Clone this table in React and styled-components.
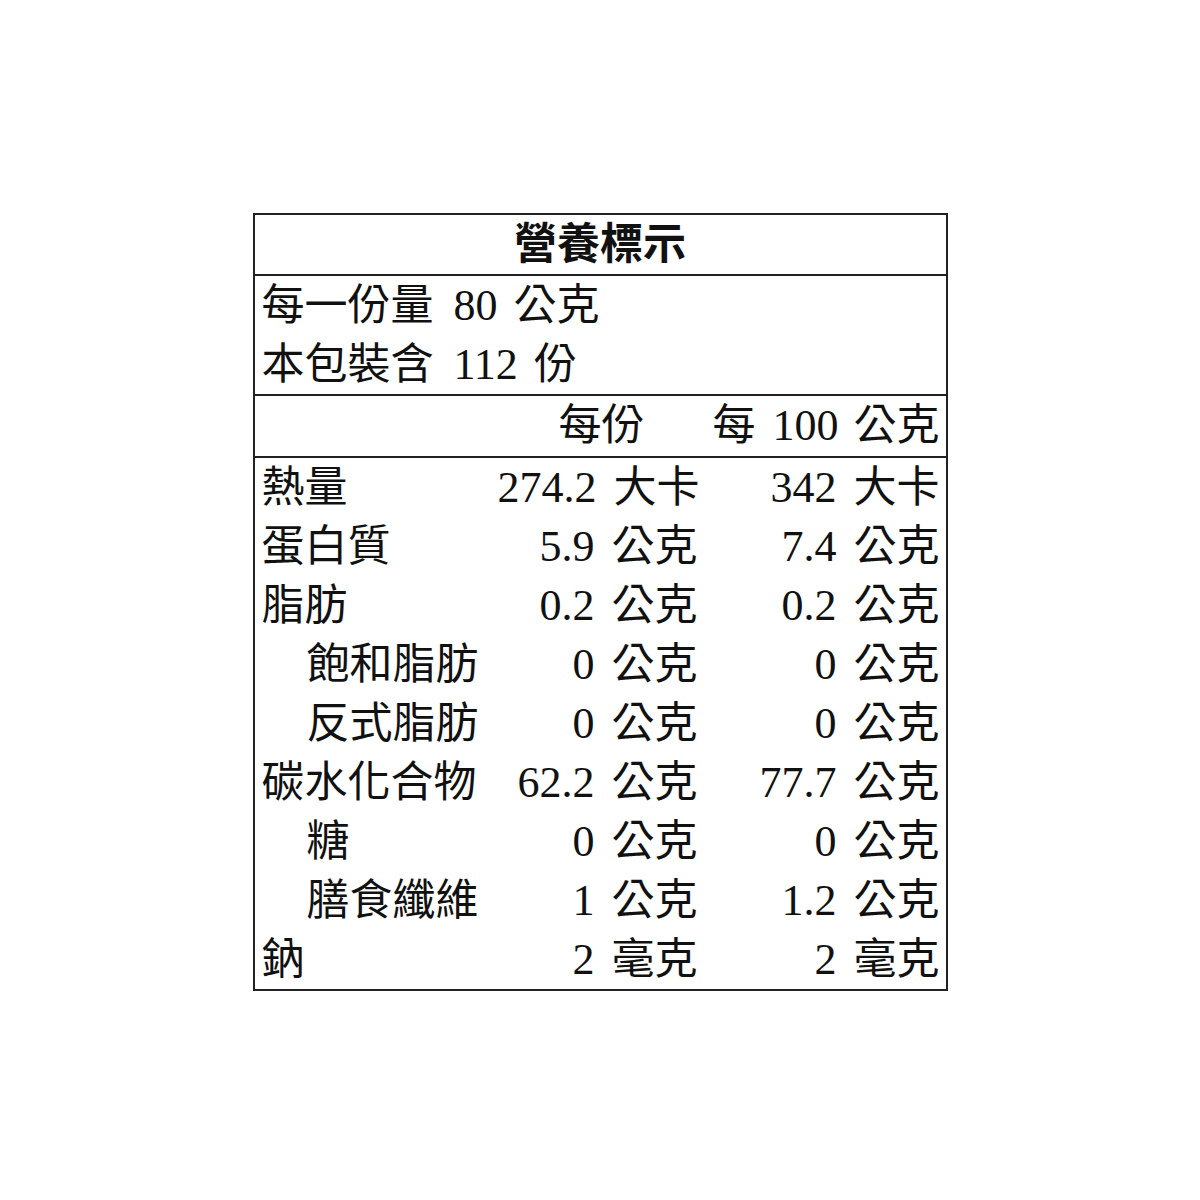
import React from 'react';
import styled, { createGlobalStyle } from 'styled-components';

const GlobalStyle = createGlobalStyle`
    html, body {
        margin: 0;
        padding: 0;
        background: #ffffff;
    }
    body {
        font-family: 'Liberation Serif', 'Noto Sans CJK TC', serif;
        color: #111111;
    }
`;

const rows = [
    { name: '熱量', serving: '274.2', per100: '342', unit: '大卡' },
    { name: '蛋白質', serving: '5.9', per100: '7.4', unit: '公克' },
    { name: '脂肪', serving: '0.2', per100: '0.2', unit: '公克' },
    { name: '飽和脂肪', serving: '0', per100: '0', unit: '公克', sub: true },
    { name: '反式脂肪', serving: '0', per100: '0', unit: '公克', sub: true },
    { name: '碳水化合物', serving: '62.2', per100: '77.7', unit: '公克' },
    { name: '糖', serving: '0', per100: '0', unit: '公克', sub: true },
    { name: '膳食纖維', serving: '1', per100: '1.2', unit: '公克', sub: true },
    { name: '鈉', serving: '2', per100: '2', unit: '毫克' },
];

const App = () => {
    return (
        <Page>
            <GlobalStyle />
            <Label>
                <Title>營養標示</Title>
                <Serving>
                    <Line>
                        每一份量<Num before={20} after={16}>80</Num>公克
                    </Line>
                    <Line>
                        本包裝含<Num before={20} after={16}>112</Num>份
                    </Line>
                </Serving>
                <HeaderRow>
                    <span />
                    <Cell pad={53}>每份</Cell>
                    <Cell>
                        每<Num before={17} after={15}>100</Num>公克
                    </Cell>
                </HeaderRow>
                <Body>
                    {rows.map((r) => (
                        <Row key={r.name}>
                            <Name sub={r.sub}>{r.name}</Name>
                            <Cell>
                                <Num after={17}>{r.serving}</Num>
                                {r.unit}
                            </Cell>
                            <Cell>
                                <Num after={17}>{r.per100}</Num>
                                {r.unit}
                            </Cell>
                        </Row>
                    ))}
                </Body>
            </Label>
        </Page>
    );
};

const Page = styled.main`
    width: 1200px;
    height: 1200px;
    display: flex;
    justify-content: center;
    align-items: flex-start;
    padding-top: 213px;
    box-sizing: border-box;
`;

const Label = styled.section`
    width: 695px;
    border: 2px solid #222222;
    box-sizing: border-box;
    font-size: 43px;
    background: #ffffff;
`;

const Title = styled.h1`
    margin: 0;
    height: 59px;
    line-height: 59px;
    text-align: center;
    font-size: 43px;
    font-weight: 700;
    border-bottom: 2px solid #222222;
`;

const Serving = styled.div`
    display: flex;
    flex-direction: column;
    padding-left: 7px;
    border-bottom: 2px solid #222222;
`;

const Line = styled.div`
    height: 59px;
    line-height: 59px;
    white-space: nowrap;
`;

const grid = `
    display: grid;
    grid-template-columns: 236px 200px 242px;
    padding: 0 6px 0 7px;
    white-space: nowrap;
`;

const HeaderRow = styled.div`
    ${grid}
    height: 60px;
    line-height: 60px;
    border-bottom: 2px solid #222222;
`;

const Body = styled.div`
    display: flex;
    flex-direction: column;
`;

const Row = styled.div`
    ${grid}
    height: 59px;
    line-height: 59px;
`;

const Name = styled.div`
    padding-left: ${(p) => (p.sub ? '45px' : '0')};
`;

const Cell = styled.div`
    text-align: right;
    padding-right: ${(p) => (p.pad ? `${p.pad}px` : '0')};
`;

const Num = styled.span`
    font-size: 44px;
    margin-left: ${(p) => p.before || 0}px;
    margin-right: ${(p) => p.after || 0}px;
`;

export default App;
